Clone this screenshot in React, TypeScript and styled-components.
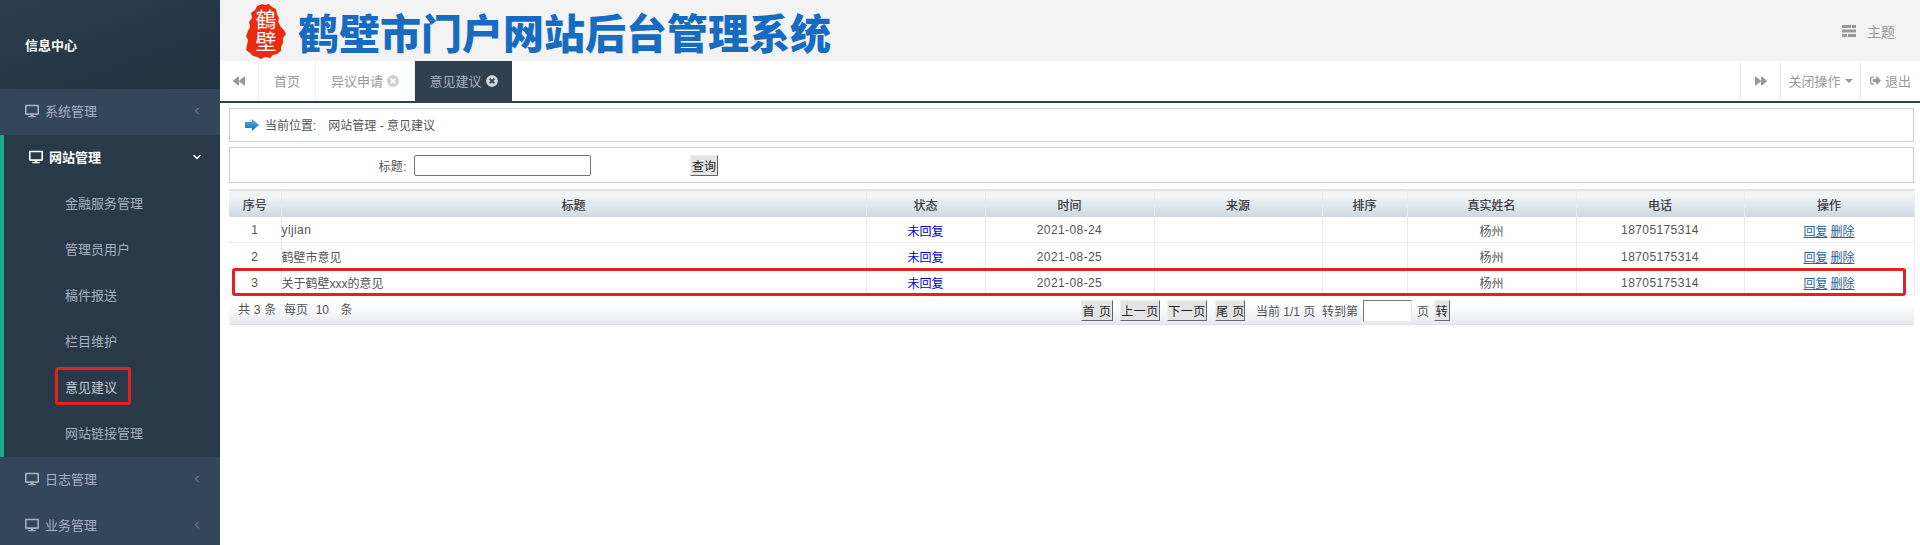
import React from "react";
import styled, { createGlobalStyle } from "styled-components";
import { FaDesktop, FaBackward, FaForward, FaTimesCircle, FaSignOutAlt } from "react-icons/fa";
import { ChevronLeft, ChevronDown } from "lucide-react";

const Global = createGlobalStyle`
  html, body { margin: 0; padding: 0; height: 100%; overflow: hidden; background: #fff; }
  body { font-family: "Liberation Sans", "Noto Sans CJK SC", sans-serif; font-size: 12px; color: #555; }
  *, *::before, *::after { box-sizing: border-box; }
`;

const Page = styled.div`display: flex; height: 545px; overflow: hidden;`;

const Sidebar = styled.aside`
  width: 220px; flex: none; background: #2f4050; overflow: hidden; font-size: 13px; color: #a7b1c2;
`;
const Profile = styled.div`
  height: 89px; padding: 0 0 1px 25px; display: flex; align-items: center; color: #fff; font-weight: 700;
  background: linear-gradient(160deg, #2b3d4e 0%, #263646 55%, #233341 100%);
`;
const MenuItem = styled.div`
  height: 46px; display: flex; align-items: center; padding: 0 17px 3px 25px; gap: 6px; background: #33465a;
  svg:first-child { font-size: 14px; flex: none; }
`;
const MenuLabel = styled.span`flex: 1;`;
const Active = styled.div`
  background: #2a3947; border-left: 4px solid #19aa8d; height: 322px;
`;
const ActiveHead = styled(MenuItem)`
  background: transparent; color: #fff; font-weight: 700; padding-right: 17px;
`;
const SubItem = styled.div<{ $marked?: boolean }>`
  height: 46px; display: flex; align-items: center; padding: 0 0 3px 61px; position: relative;
  color: ${(p) => (p.$marked ? "#c3cad6" : "#a7b1c2")};
  ${(p) => p.$marked && `
    &::after {
      content: ""; position: absolute; left: 51px; top: 2px; width: 76px; height: 38px;
      border: 3px solid #e5201e; border-radius: 3px;
    }
  `}
`;

const Main = styled.main`flex: 1; min-width: 0; display: flex; flex-direction: column;`;
const Header = styled.header`
  height: 61px; background: #f3f3f3; display: flex; align-items: center; padding-left: 25px; color: #999;
`;
const Seal = styled.svg`width: 42px; height: 56px; flex: none;`;
const SealText = styled.text`
  writing-mode: vertical-rl; font-size: 21px; fill: #fff; letter-spacing: 1px;
  font-family: "Noto Sans CJK TC", sans-serif;
`;
const Title = styled.h1`
  margin: 0 0 0 11px; font-size: 41px; line-height: 48px; font-weight: 900; color: #176cc1; flex: 1;
  font-family: "Noto Sans CJK SC", sans-serif; white-space: nowrap;
`;
const Theme = styled.div`
  display: flex; align-items: center; gap: 11px; font-size: 14px; margin-right: 25px; color: #999;
`;
const TabBar = styled.nav`
  height: 42px; display: flex; background: #fff; border-bottom: 2px solid #2f4050; font-size: 13px; color: #999;
`;
const TabBtn = styled.div<{ $w: number; $active?: boolean; $right?: boolean }>`
  width: ${(p) => p.$w}px; flex: none; display: flex; align-items: center; justify-content: center; gap: 4px;
  padding-bottom: 1px; border-right: 1px solid #f0f0f0;
  ${(p) => p.$right && "border-right: none; border-left: 1px solid #eee;"}
  ${(p) => p.$active && "background: #2f4050; color: #a7b1c2; border-right: none;"}
`;
const Spacer = styled.div`flex: 1;`;
const Caret = styled.i`
  width: 0; height: 0; margin-left: 0; border-left: 4px solid transparent; border-right: 4px solid transparent;
  border-top: 4px solid #999;
`;

const Content = styled.div`padding: 5px 6px 0 9px; display: flex; flex-direction: column;`;
const Panel = styled.div<{ $h: number }>`
  height: ${(p) => p.$h}px; border: 1px solid #c5d0d0; display: flex; align-items: center; background: #fff;
`;
const Crumb = styled(Panel)`padding: 0 0 1px 15px; color: #555;`;
const CrumbPath = styled.span`margin-left: 12px; white-space: pre;`;
const Arrow = styled.svg`width: 14px; height: 12px; margin-right: 6px; flex: none;`;
const SearchPanel = styled(Panel)`margin-top: 5px;`;
const SearchLabel = styled.label`width: 177px; text-align: right; flex: none; letter-spacing: 0.4px;`;
const TextInput = styled.input`
  width: 177px; height: 21px; margin-left: 7px; border: 1px solid #767676; border-radius: 2px; background: #fff; padding: 0; flex: none;
`;
const QueryBtn = styled.button`
  margin-left: 99px; width: 28px; height: 21px; padding: 0; font: inherit; color: #222;
  background: #e4e4e4; border: 1px solid; border-color: #eee #666 #666 #eee;
`;

const TableWrap = styled.div`margin-top: 6px; position: relative;`;
const Table = styled.table`
  width: 100%; table-layout: fixed; border-collapse: collapse; background: #fff;
`;
const Th = styled.th`
  height: 27px; padding: 2px 0 0; font-size: 12px; font-weight: 400; color: #333; text-align: center;
  background: linear-gradient(#f3f4f6 0%, #f3f4f6 22%, #e6ebf0 45%, #ccd8e4 100%);
  border-right: 1px solid #e8ecf0; border-top: 1px solid #dcdfe2;
  -webkit-text-stroke: 0.2px #333;
`;
const Td = styled.td<{ $left?: boolean; $num?: boolean }>`
  height: 26px; padding: 2px 0 0; font-size: 12px; color: #555; text-align: ${(p) => (p.$left ? "left" : "center")};
  border-right: 1px solid #e9e9e9; border-bottom: 1px solid #e9e9e9;
  letter-spacing: ${(p) => (p.$num ? "0.4px" : "0")};
`;
const Status = styled.span`color: #0000c8;`;
const ActionLink = styled.a`color: #2a6496; text-decoration: underline; margin: 0 1.5px; cursor: pointer;`;
const RowMark = styled.div`
  position: absolute; left: 3px; right: 8px; top: 79px; height: 28px;
  border: 3px solid #e5201e; border-radius: 3px; pointer-events: none;
`;
const Footer = styled.div`
  height: 30px; display: flex; padding-left: 9px; border-bottom: 1px solid #dfe2e5;
  background: linear-gradient(#fff 0%, #fff 35%, #e6e9ee 100%);
`;
const Totals = styled.div`width: 843px; flex: none; padding-top: 5px; white-space: pre; word-spacing: 0.5px;`;
const Pager = styled.div`display: flex; align-items: center; height: 23px; margin-top: 4px; white-space: pre;`;
const PageBtn = styled.button<{ $w: number; $mr?: number; $ml?: number }>`
  width: ${(p) => p.$w}px; height: 21px; margin: 0 ${(p) => p.$mr ?? 0}px 0 ${(p) => p.$ml ?? 0}px; padding: 0; font: inherit; color: #222;
  letter-spacing: 0.5px; background: #e4e4e4; border: 1px solid; border-color: #eee #666 #666 #eee;
`;
const JumpInput = styled.input`
  width: 49px; height: 22px; margin: 0 5px; padding: 0; background: #fff;
  border: 1px solid; border-color: #777 #e8e8e8 #e8e8e8 #777;
`;

const cols = [52, 585, 119, 169, 168, 85, 169, 168, 170];
const heads = ["序号", "标题", "状态", "时间", "来源", "排序", "真实姓名", "电话", "操作"];
const rows = [
  { n: 1, t: "yijian", d: "2021-08-24", latin: true },
  { n: 2, t: "鹤壁市意见", d: "2021-08-25" },
  { n: 3, t: "关于鹤壁xxx的意见", d: "2021-08-25" },
];
const subs = ["金融服务管理", "管理员用户", "稿件报送", "栏目维护", "意见建议", "网站链接管理"];

export default function App() {
  return (
    <Page>
      <Global />
      <Sidebar>
        <Profile>信息中心</Profile>
        <MenuItem><FaDesktop /><MenuLabel>系统管理</MenuLabel><ChevronLeft size={12} strokeWidth={1.5} /></MenuItem>
        <Active>
          <ActiveHead><FaDesktop color="#fff" /><MenuLabel>网站管理</MenuLabel><ChevronDown size={12} strokeWidth={3} /></ActiveHead>
          {subs.map((s) => (
            <SubItem key={s} $marked={s === "意见建议"}>{s}</SubItem>
          ))}
        </Active>
        <MenuItem><FaDesktop /><MenuLabel>日志管理</MenuLabel><ChevronLeft size={12} strokeWidth={1.5} /></MenuItem>
        <MenuItem><FaDesktop /><MenuLabel>业务管理</MenuLabel><ChevronLeft size={12} strokeWidth={1.5} /></MenuItem>
      </Sidebar>
      <Main>
        <Header>
          <Seal viewBox="0 0 42 56">
            <path d="M17 1 L20 2 L24 1 L27 4 L31 6 L32 11 L34 15 L33 19 L36 24 L39 27 L41 31 L38 35 L38 40 L36 44 L36 48 L32 51 L28 52 L25 55 L20 54 L16 56 L12 54 L8 53 L5 50 L1 47 L2 42 L3 37 L1 33 L3 28 L5 24 L4 19 L7 15 L6 10 L10 7 L12 3 Z" fill="#ea2c0e" />
            <SealText x="21" y="6">鶴壁</SealText>
          </Seal>
          <Title>鹤壁市门户网站后台管理系统</Title>
          <Theme>
            <svg width="14" height="12" viewBox="0 0 14 12" fill="#999">
              <rect x="0" y="0" width="9" height="3" /><rect x="10" y="0" width="4" height="3" />
              <rect x="0" y="4.5" width="14" height="3" />
              <rect x="0" y="9" width="5" height="3" /><rect x="6" y="9" width="8" height="3" />
            </svg>
            主题
          </Theme>
        </Header>
        <TabBar>
          <TabBtn $w={39}><FaBackward size={12} /></TabBtn>
          <TabBtn $w={57}>首页</TabBtn>
          <TabBtn $w={99}>异议申请<FaTimesCircle size={12} color="#ccc" /></TabBtn>
          <TabBtn $w={97} $active>意见建议<FaTimesCircle size={12} color="#d5dae0" /></TabBtn>
          <Spacer />
          <TabBtn $w={40} $right><FaForward size={12} /></TabBtn>
          <TabBtn $w={80} $right>关闭操作<Caret /></TabBtn>
          <TabBtn $w={60} $right><FaSignOutAlt size={11} />退出</TabBtn>
        </TabBar>
        <Content>
          <Crumb $h={34}>
            <Arrow viewBox="0 0 14 12">
              <defs>
                <linearGradient id="arrowFill" x1="0" y1="0" x2="0" y2="1">
                  <stop offset="0" stopColor="#5ab4e6" />
                  <stop offset="1" stopColor="#146fa8" />
                </linearGradient>
              </defs>
              <path d="M0 3 H7 V0 L14 6 L7 12 V9 H0 Z" fill="url(#arrowFill)" />
            </Arrow>
            当前位置:<CrumbPath>网站管理 - 意见建议</CrumbPath>
          </Crumb>
          <SearchPanel $h={36}>
            <SearchLabel>标题:</SearchLabel>
            <TextInput />
            <QueryBtn>查询</QueryBtn>
          </SearchPanel>
          <TableWrap>
            <Table>
              <colgroup>
                {cols.map((w, i) => <col key={i} width={w} />)}
              </colgroup>
              <thead>
                <tr>{heads.map((h) => <Th key={h}>{h}</Th>)}</tr>
              </thead>
              <tbody>
                {rows.map((r) => (
                  <tr key={r.n}>
                    <Td $num>{r.n}</Td>
                    <Td $left $num={r.latin}>{r.t}</Td>
                    <Td><Status>未回复</Status></Td>
                    <Td $num>{r.d}</Td>
                    <Td />
                    <Td />
                    <Td>杨州</Td>
                    <Td $num>18705175314</Td>
                    <Td><ActionLink>回复</ActionLink><ActionLink>删除</ActionLink></Td>
                  </tr>
                ))}
              </tbody>
            </Table>
            <RowMark />
            <Footer>
              <Totals>{"共 3 条  每页  10   条"}</Totals>
              <Pager>
                <PageBtn $w={32} $mr={7}>首 页</PageBtn>
                <PageBtn $w={40} $mr={7}>上一页</PageBtn>
                <PageBtn $w={40} $mr={8}>下一页</PageBtn>
                <PageBtn $w={30} $mr={11}>尾 页</PageBtn>
                {"当前 1/1 页  转到第"}
                <JumpInput />
                页
                <PageBtn $w={16} $ml={5}>转</PageBtn>
              </Pager>
            </Footer>
          </TableWrap>
        </Content>
      </Main>
    </Page>
  );
}
